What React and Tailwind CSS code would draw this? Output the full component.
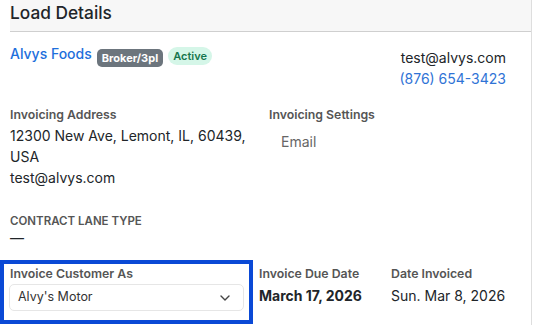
export default function App() {
  return (
    <div
      className="w-[533px] h-[325px] overflow-hidden bg-white"
      style={{ fontFamily: "Inter, 'Noto Sans', sans-serif" }}
    >
      <div className="w-[532px] h-[325px] border-r border-[#dedede] flex flex-col">
        {/* header */}
        <div className="ml-[10px] h-[32px] bg-[#f7f7f7] border-b border-[#cfcfcf] text-[17.3px] leading-[25px] font-medium text-[#212529]">
          Load Details
        </div>

        {/* row 1 */}
        <div className="pl-[10px] pr-[25px] pt-[12px] flex justify-between items-start">
          <div className="flex items-start gap-[5px]">
            <span className="text-[14px] leading-[20px] font-medium text-[#1d6fdc]">Alvys Foods</span>
            <span className="mt-[5px] h-[18px] px-[5px] rounded-[5px] bg-[#6c757d] text-white text-[11px] leading-[18px] font-bold">
              Broker/3pl
            </span>
            <span className="mt-[3px] h-[18px] px-[5px] rounded-full bg-[#d5f6e8] text-[#16754d] text-[11px] leading-[18px] font-semibold">
              Active
            </span>
          </div>
          <div className="mt-[3px] flex flex-col items-end text-[14px] leading-[21px]">
            <span className="text-[#212529]">test@alvys.com</span>
            <span className="text-[#2f73d6]">(876) 654-3423</span>
          </div>
        </div>

        {/* row 2 */}
        <div className="pl-[10px] mt-[17px] grid grid-cols-[259px_1fr]">
          <div>
            <div className="text-[12.3px] leading-[18px] font-semibold text-[#555]">Invoicing Address</div>
            <div className="mt-[1px] w-[250px] text-[14px] leading-[21px] text-[#212529]">
              12300 New Ave, Lemont, IL, 60439, USA
              <br />
              test@alvys.com
            </div>
          </div>
          <div>
            <div className="text-[12.3px] leading-[18px] font-semibold text-[#555]">Invoicing Settings</div>
            <div className="mt-[7px] pl-[12px] text-[14px] leading-[21px] text-[#666]">Email</div>
          </div>
        </div>

        {/* row 3 */}
        <div className="pl-[10px] mt-[25px]">
          <div className="text-[11.5px] leading-[16px] font-semibold text-[#555] uppercase">Contract Lane Type</div>
          <div className="text-[14px] leading-[18px] text-[#212529]">—</div>
        </div>

        {/* row 4 */}
        <div className="mt-[13px] flex items-start">
          <div className="w-[253px] border-4 border-[#0a49d6] px-[5px] pt-[1px] pb-[9px]">
            <div className="pl-[1px] text-[12.3px] leading-[18px] font-semibold text-[#555]">Invoice Customer As</div>
            <div className="mt-[1px] h-[27px] rounded-[5px] border border-[#e6e6e6] flex items-center justify-between pl-[8px] pr-[13px]">
              <span className="text-[12.5px] text-[#333]">Alvy's Motor</span>
              <svg width="10" height="6" viewBox="0 0 10 6" fill="none">
                <path d="M1 1L5 5L9 1" stroke="#444" strokeWidth="1.4" strokeLinecap="round" strokeLinejoin="round" />
              </svg>
            </div>
          </div>
          <div className="ml-[6px] w-[132px] pt-[5px]">
            <div className="text-[12.3px] leading-[18px] font-semibold text-[#555]">Invoice Due Date</div>
            <div className="mt-[2px] text-[14px] leading-[21px] font-bold text-[#212529]">March 17, 2026</div>
          </div>
          <div className="pt-[5px]">
            <div className="text-[12.3px] leading-[18px] font-semibold text-[#555]">Date Invoiced</div>
            <div className="mt-[2px] text-[14px] leading-[21px] text-[#212529]">Sun. Mar 8, 2026</div>
          </div>
        </div>
      </div>
    </div>
  );
}
